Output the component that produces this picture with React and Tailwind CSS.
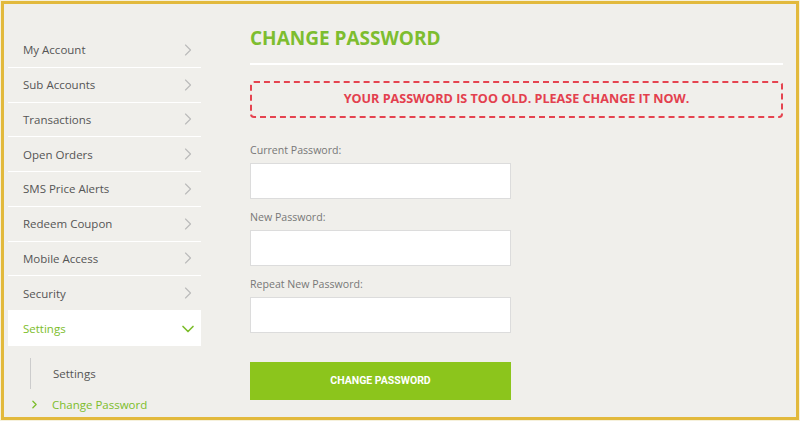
import React from 'react';
import { ChevronRight, ChevronDown } from 'lucide-react';

const menu = [
    'My Account',
    'Sub Accounts',
    'Transactions',
    'Open Orders',
    'SMS Price Alerts',
    'Redeem Coupon',
    'Mobile Access',
    'Security',
];

const fields = ['Current Password:', 'New Password:', 'Repeat New Password:'];

const App = () => {
    return (
        <div className="w-[800px] h-[421px] bg-[#f6f1dc] pt-px pl-px">
            <div
                className="w-[798px] h-[419px] border-[3px] border-[#e2b93c] bg-[#f0efeb] flex overflow-hidden"
                style={{ fontFamily: '"Open Sans", "Liberation Sans", sans-serif' }}
            >
                {/* sidebar */}
                <div className="w-[193px] ml-[4px] pt-[29px] shrink-0">
                    {menu.map((item) => (
                        <div
                            key={item}
                            className="h-[34.75px] border-b border-white flex items-center justify-between pl-[15px] pr-[3px] text-[11.5px] text-[#555]"
                        >
                            <span>{item}</span>
                            <ChevronRight size={20} strokeWidth={1.4} className="text-[#bbb]" />
                        </div>
                    ))}
                    <div className="h-[35px] bg-white flex items-center justify-between pl-[15px] pr-[3px] text-[11.5px] text-[#7cbd2a]">
                        <span>Settings</span>
                        <ChevronDown size={20} strokeWidth={2} className="text-[#7cbd2a]" />
                    </div>
                    <div className="pt-[12px] pl-[22px]">
                        <div className="h-[31px] border-l border-[#ccc] flex items-center pl-[22px] text-[11.5px] text-[#555]">
                            Settings
                        </div>
                        <div className="h-[31px] flex items-center text-[11.5px] text-[#7cbd2a]">
                            <ChevronRight size={13} strokeWidth={2.4} className="-ml-[2px] w-[13px]" />
                            <span className="ml-[11px]">Change Password</span>
                        </div>
                    </div>
                </div>

                {/* content */}
                <div className="ml-[49px] w-[533px] pt-[22px]">
                    <h1 className="text-[19px] leading-[24px] font-bold text-[#7dbd2f]">CHANGE PASSWORD</h1>
                    <div className="mt-[13px] h-[2px] bg-white" />
                    <div className="mt-[16px] h-[37px] border-2 border-dashed border-[#e5434f] rounded-[4px] flex items-center justify-center text-[12.6px] font-bold text-[#e3404e]">
                        YOUR PASSWORD IS TOO OLD. PLEASE CHANGE IT NOW.
                    </div>
                    <div className="mt-[14px]">
                        {fields.map((label) => (
                            <div key={label} className="pt-[10px]">
                                <label className="block h-[16px] leading-[16px] text-[10.6px] text-[#777]">{label}</label>
                                <input
                                    type="password"
                                    className="mt-[5px] block w-[261px] h-[36px] bg-white border border-[#dcdcdc] outline-none"
                                />
                            </div>
                        ))}
                    </div>
                    <button
                        className="mt-[29px] w-[261px] h-[38px] bg-[#8cc51c] text-white text-[10.5px] font-bold"
                        style={{ fontFamily: 'Roboto, "Liberation Sans", sans-serif' }}
                    >
                        CHANGE PASSWORD
                    </button>
                </div>
            </div>
        </div>
    );
};

export default App;
